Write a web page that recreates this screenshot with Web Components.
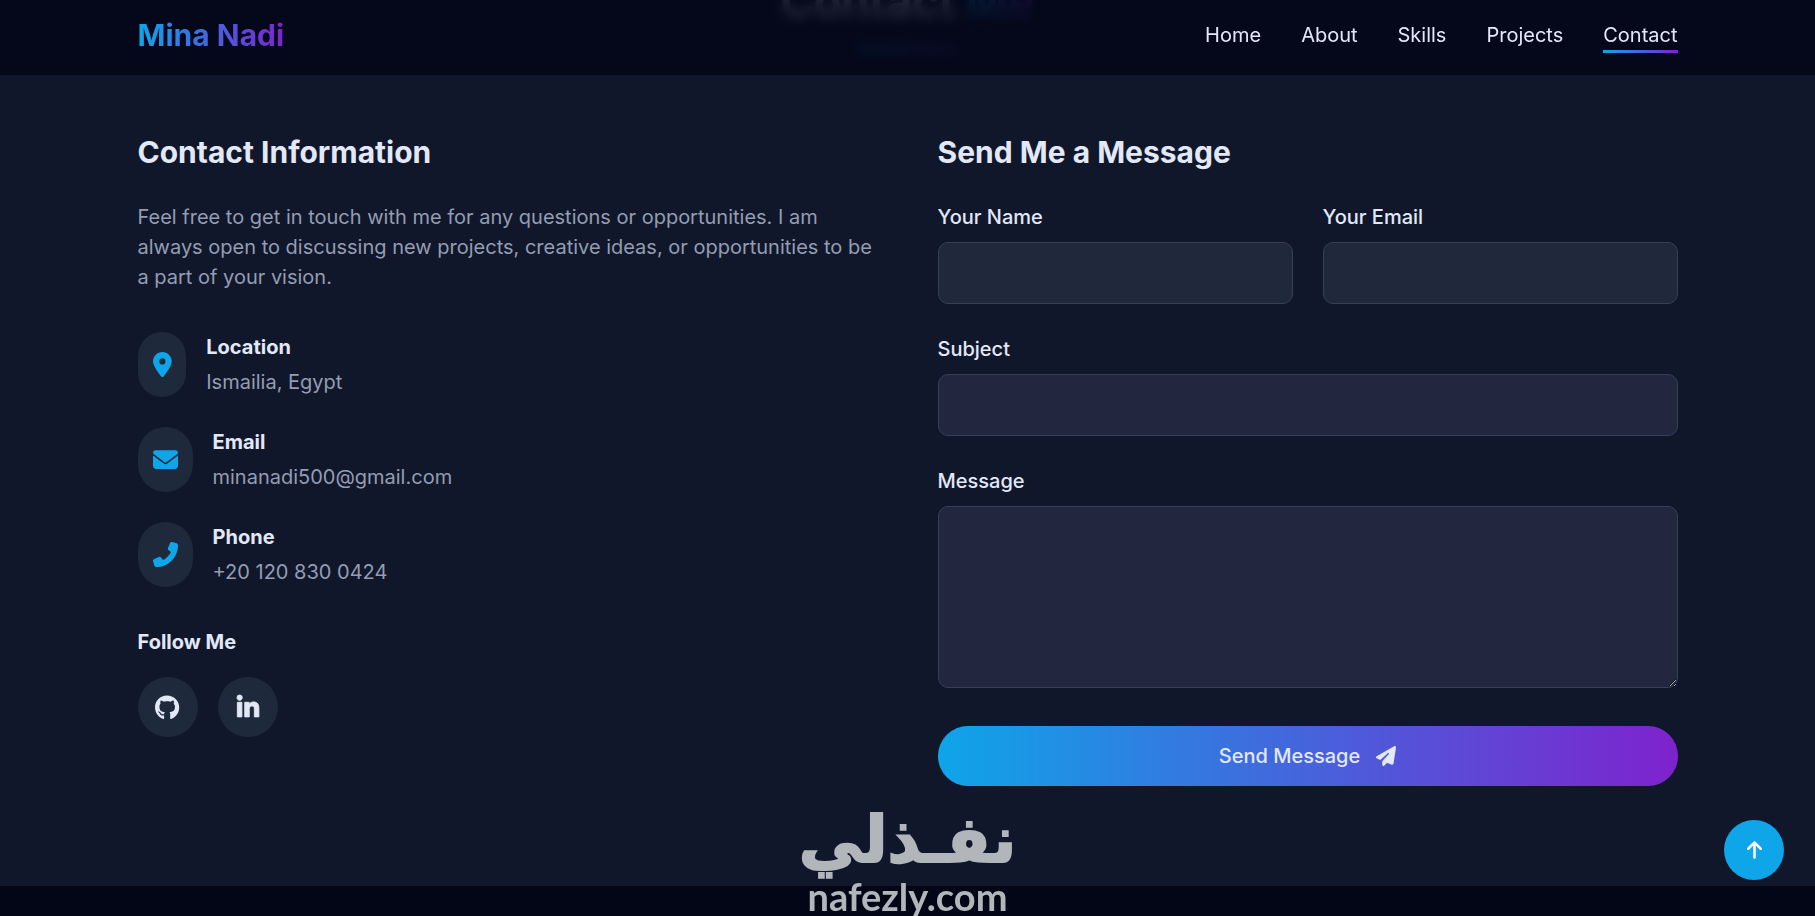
<!DOCTYPE html>
<html lang="en">
<head>
<meta charset="utf-8">
<meta name="viewport" content="width=device-width, initial-scale=1">
<title>Mina Nadi</title>
<style>
:root {
    --page: #020617;
    --section: #10172a;
    --surface: #1e293b;
    --text: #e2e8f8;
    --muted: #949db2;
    --accent: #0ea5e9;
    --gradient: linear-gradient(to right, #0ea5e9, #7e22ce);
}
html, body {
    margin: 0;
    height: 100%;
}
body {
    overflow: hidden;
    background: var(--page);
    color: var(--text);
    font: 20px/30px Inter, sans-serif;
}
</style>
</head>
<body>
<site-header>
    <nav-link href="#home">Home</nav-link>
    <nav-link href="#about">About</nav-link>
    <nav-link href="#skills">Skills</nav-link>
    <nav-link href="#projects">Projects</nav-link>
    <nav-link href="#contact" active>Contact</nav-link>
</site-header>

<contact-section>
    <contact-info slot="info">
        <info-item icon="location" heading="Location">Ismailia, Egypt</info-item>
        <info-item icon="envelope" heading="Email">minanadi500@gmail.com</info-item>
        <info-item icon="phone" heading="Phone">+20 120 830 0424</info-item>
    </contact-info>
    <contact-form slot="form"></contact-form>
</contact-section>

<scroll-top></scroll-top>
<site-watermark></site-watermark>

<script>
const ICONS = {
    location: ["0 0 384 512", "M215.7 499.2C267 435 384 279.4 384 192C384 86 298 0 192 0S0 86 0 192c0 87.4 117 243 168.3 307.2c12.3 15.3 35.1 15.3 47.4 0zM192 128a64 64 0 1 1 0 128 64 64 0 1 1 0-128z"],
    envelope: ["0 0 512 512", "M48 64C21.5 64 0 85.5 0 112c0 15.1 7.1 29.3 19.2 38.4L236.8 313.6c11.4 8.5 27 8.5 38.4 0L492.8 150.4c12.1-9.1 19.2-23.3 19.2-38.4c0-26.5-21.5-48-48-48H48zM0 176V384c0 35.3 28.7 64 64 64H448c35.3 0 64-28.7 64-64V176L294.4 339.2c-22.8 17.1-54 17.1-76.8 0L0 176z"],
    phone: ["0 0 512 512", "M347.1 24.6c7.7-18.6 28-28.5 47.4-23.2l88 24C499.9 30.2 512 46 512 64c0 247.4-200.6 448-448 448c-18 0-33.8-12.1-38.6-29.5l-24-88c-5.3-19.4 4.6-39.7 23.2-47.4l96-40c16.3-6.8 35.2-2.1 46.3 11.6L207.3 368c70.4-33.3 127.4-90.3 160.7-160.7L318.7 167c-13.7-11.2-18.4-30-11.6-46.3l40-96z"],
    github: ["0 0 496 512", "M165.9 397.4c0 2-2.3 3.6-5.2 3.6-3.3.3-5.6-1.3-5.6-3.6 0-2 2.3-3.6 5.2-3.6 3-.3 5.6 1.3 5.6 3.6zm-31.1-4.5c-.7 2 1.3 4.3 4.3 4.9 2.6 1 5.6 0 6.2-2s-1.3-4.3-4.3-5.2c-2.6-.7-5.5.3-6.2 2.3zm44.2-1.7c-2.9.7-4.9 2.6-4.6 4.9.3 2 2.9 3.3 5.9 2.6 2.9-.7 4.9-2.6 4.6-4.6-.3-1.9-3-3.2-5.9-2.9zM244.8 8C106.1 8 0 113.3 0 252c0 110.9 69.8 205.8 169.5 239.2 12.8 2.3 17.3-5.6 17.3-12.1 0-6.2-.3-40.4-.3-61.4 0 0-70 15-84.7-29.8 0 0-11.4-29.1-27.8-36.6 0 0-22.9-15.7 1.6-15.4 0 0 24.9 2 38.6 25.8 21.9 38.6 58.6 27.5 72.9 20.9 2.3-16 8.8-27.1 16-33.7-55.9-6.2-112.3-14.3-112.3-110.5 0-27.5 7.6-41.3 23.6-58.9-2.6-6.5-11.1-33.3 2.6-67.9 20.9-6.5 69 27 69 27 20-5.6 41.5-8.5 62.8-8.5s42.8 2.9 62.8 8.5c0 0 48.1-33.6 69-27 13.7 34.7 5.2 61.4 2.6 67.9 16 17.7 25.8 31.5 25.8 58.9 0 96.5-58.9 104.2-114.8 110.5 9.2 7.9 17 22.9 17 46.4 0 33.7-.3 75.4-.3 83.6 0 6.5 4.6 14.4 17.3 12.1C428.2 457.8 496 362.9 496 252 496 113.3 383.5 8 244.8 8z"],
    linkedin: ["0 0 448 512", "M100.28 448H7.4V148.9h92.88zM53.79 108.1C24.09 108.1 0 83.5 0 53.8a53.79 53.79 0 0 1 107.58 0c0 29.7-24.1 54.3-53.79 54.3zM447.9 448h-92.68V302.4c0-34.7-.7-79.2-48.29-79.2-48.29 0-55.69 37.7-55.69 76.7V448h-92.78V148.9h89.08v40.8h1.3c12.4-23.5 42.69-48.3 87.88-48.3 94 0 111.28 61.9 111.28 142.3V448z"],
    plane: ["0 0 512 512", "M498.1 5.6c10.1 7 15.4 19.1 13.5 31.2l-64 416c-1.5 9.7-7.4 18.2-16 23s-18.9 5.4-28 1.6L284 427.7l-68.5 74.1c-8.9 9.7-22.9 12.9-35.2 8.1S160 493.2 160 480V396.4c0-4 1.5-7.8 4.2-10.7L331.8 202.8c5.8-6.3 5.6-16-.4-22s-15.7-6.4-22-.7L106 360.8 17.7 316.6C7.1 311.3 .3 300.7 0 288.9s5.9-22.8 16.1-28.7l448-256c10.7-6.1 23.9-5.5 34 1.4z"],
    up: ["0 0 384 512", "M214.6 41.4c-12.5-12.5-32.8-12.5-45.3 0l-160 160c-12.5 12.5-12.5 32.8 0 45.3s32.8 12.5 45.3 0L160 141.2V448c0 17.7 14.3 32 32 32s32-14.3 32-32V141.2L329.4 246.6c12.5 12.5 32.8 12.5 45.3 0s12.5-32.8 0-45.3l-160-160z"]
};

// base class: every element clones its own html into an open shadow root
class BaseElement extends HTMLElement {
    constructor() {
        super();
        const template = document.createElement("template");
        template.innerHTML = `<style>*, *::before, *::after { box-sizing: border-box; }</style>` + this.constructor.html;
        this.attachShadow({mode: "open"});
        this.shadowRoot.appendChild(template.content.cloneNode(true));
    }

    connectedCallback() {
        this.render();
    }

    render() {}
}

class AppIcon extends BaseElement {
    static html = `
<style>
:host {
    display: inline-flex;
    --size: 25px;
}
svg {
    display: block;
    height: var(--size);
    overflow: visible;
    fill: currentColor;
}
:host([name="linkedin"]) path {
    stroke: currentColor;
    stroke-width: 18;
}
</style>
<svg aria-hidden="true"><path></path></svg>
`;

    render() {
        const [box, d] = ICONS[this.getAttribute("name")];
        this.shadowRoot.querySelector("svg").setAttribute("viewBox", box);
        this.shadowRoot.querySelector("path").setAttribute("d", d);
    }
}

class NavLink extends BaseElement {
    static html = `
<style>
:host { display: block; }
a {
    display: block;
    position: relative;
    color: inherit;
    text-decoration: none;
}
:host([active]) a::after {
    content: "";
    position: absolute;
    left: 0;
    right: 0;
    top: 100%;
    height: 3px;
    background: var(--gradient);
}
</style>
<a><slot></slot></a>
`;

    render() {
        this.shadowRoot.querySelector("a").href = this.getAttribute("href");
    }
}

class SiteHeader extends BaseElement {
    static html = `
<style>
:host {
    display: block;
    position: fixed;
    inset: 0 0 auto;
    z-index: 10;
    padding: 15px 20px 20px;
    background: rgba(2, 6, 23, 0.86);
    backdrop-filter: blur(6px);
}
.bar {
    display: flex;
    align-items: center;
    justify-content: space-between;
    max-width: 1540px;
    margin: 0 auto;
}
.logo {
    font-size: 30px;
    line-height: 40px;
    font-weight: 700;
    text-decoration: none;
    color: transparent;
    background: var(--gradient);
    background-clip: text;
    -webkit-background-clip: text;
}
nav {
    display: flex;
    gap: 40px;
}
</style>
<div class="bar">
    <a class="logo" href="#home">Mina Nadi</a>
    <nav><slot></slot></nav>
</div>
`;
}

class ContactSection extends BaseElement {
    static html = `
<style>
:host {
    display: block;
    /* scrolled so that the title sits under the header */
    margin-top: -123px;
    padding: 100px 20px;
    background: var(--section);
}
h2 {
    margin: 0;
    font-size: 45px;
    line-height: 50px;
    font-weight: 700;
    text-align: center;
}
h2 span {
    color: transparent;
    background: var(--gradient);
    background-clip: text;
    -webkit-background-clip: text;
}
.rule {
    width: 100px;
    height: 5px;
    margin: 20px auto 80px;
    background: var(--gradient);
}
.columns {
    display: grid;
    grid-template-columns: 1fr 1fr;
    gap: 60px;
    max-width: 1540px;
    margin: 0 auto;
}
</style>
<section>
    <h2>Contact <span>Me</span></h2>
    <div class="rule"></div>
    <div class="columns">
        <slot name="info"></slot>
        <slot name="form"></slot>
    </div>
</section>
`;
}

class ContactInfo extends BaseElement {
    static html = `
<style>
:host { display: block; }
h3 {
    margin: 0 0 30px;
    font-size: 30px;
    line-height: 40px;
    font-weight: 700;
}
p {
    margin: 0 0 40px;
    color: var(--muted);
}
.items {
    display: flex;
    flex-direction: column;
    gap: 30px;
    margin-bottom: 40px;
}
h4 {
    margin: 0 0 20px;
    font-size: 20px;
    font-weight: 700;
}
.social {
    display: flex;
    gap: 20px;
}
.social a {
    display: flex;
    align-items: center;
    justify-content: center;
    width: 60px;
    height: 60px;
    border-radius: 50%;
    background: var(--surface);
    color: var(--text);
}
</style>
<h3>Contact Information</h3>
<p>Feel free to get in touch with me for any questions or opportunities. I am always open to discussing new projects, creative ideas, or opportunities to be a part of your vision.</p>
<div class="items"><slot></slot></div>
<h4>Follow Me</h4>
<div class="social">
    <a href="#github" aria-label="GitHub"><app-icon name="github"></app-icon></a>
    <a href="#linkedin" aria-label="LinkedIn"><app-icon name="linkedin"></app-icon></a>
</div>
`;
}

class InfoItem extends BaseElement {
    static html = `
<style>
:host {
    display: flex;
    gap: 20px;
}
.icon {
    display: flex;
    align-items: center;
    padding: 15px;
    border-radius: 50px;
    background: var(--surface);
    color: var(--accent);
}
h4 {
    margin: 0 0 5px;
    font-size: 20px;
    font-weight: 700;
}
.value { color: var(--muted); }
</style>
<div class="icon"></div>
<div>
    <h4></h4>
    <div class="value"><slot></slot></div>
</div>
`;

    render() {
        this.shadowRoot.querySelector(".icon").innerHTML = `<app-icon name="${this.getAttribute("icon")}"></app-icon>`;
        this.shadowRoot.querySelector("h4").textContent = this.getAttribute("heading");
    }
}

class FormField extends BaseElement {
    static html = `
<style>
:host { display: block; }
label {
    display: block;
    margin-bottom: 10px;
    font-weight: 500;
}
input, textarea {
    display: block;
    width: 100%;
    margin: 0;
    padding: 15px;
    border: 1px solid #334155;
    border-radius: 10px;
    outline: none;
    background: var(--field, #20283b);
    color: inherit;
    font: inherit;
}
input { height: 62px; }
textarea { resize: vertical; }
</style>
<label for="field"></label>
`;

    render() {
        const type = this.getAttribute("type");
        const field = document.createElement(type === "textarea" ? "textarea" : "input");
        field.id = "field";
        if (type === "textarea") {
            field.rows = 5;
        } else {
            field.type = type;
        }
        this.shadowRoot.querySelector("label").textContent = this.getAttribute("label");
        this.shadowRoot.appendChild(field);
    }
}

class ContactForm extends BaseElement {
    static html = `
<style>
:host { display: block; }
h3 {
    margin: 0 0 30px;
    font-size: 30px;
    line-height: 40px;
    font-weight: 700;
}
form {
    display: grid;
    grid-template-columns: 1fr 1fr;
    gap: 30px;
}
.wide {
    grid-column: 1 / -1;
    --field: #22273f;
}
button {
    display: flex;
    align-items: center;
    justify-content: center;
    gap: 16px;
    height: 60px;
    margin: 8px 0 0;
    padding: 0 30px;
    border: 0;
    border-radius: 30px;
    background: var(--gradient);
    color: var(--text);
    font: inherit;
    font-weight: 500;
    cursor: pointer;
}
app-icon { --size: 20px; }
</style>
<h3>Send Me a Message</h3>
<form>
    <form-field label="Your Name" type="text"></form-field>
    <form-field label="Your Email" type="email"></form-field>
    <form-field class="wide" label="Subject" type="text"></form-field>
    <form-field class="wide" label="Message" type="textarea"></form-field>
    <button class="wide" type="submit">Send Message <app-icon name="plane"></app-icon></button>
</form>
`;
}

class ScrollTop extends BaseElement {
    static html = `
<style>
:host {
    display: block;
    position: fixed;
    right: 31px;
    bottom: 36px;
    z-index: 5;
}
button {
    display: flex;
    align-items: center;
    justify-content: center;
    width: 60px;
    height: 60px;
    padding: 0;
    border: 0;
    border-radius: 50%;
    background: var(--accent);
    color: #fff;
    cursor: pointer;
}
app-icon { --size: 20px; }
</style>
<button type="button" aria-label="Back to top"><app-icon name="up"></app-icon></button>
`;

    render() {
        this.shadowRoot.querySelector("button").addEventListener("click", () => {
            window.scrollTo({top: 0, behavior: "smooth"});
        });
    }
}

class SiteWatermark extends BaseElement {
    static html = `
<style>
:host {
    display: flex;
    flex-direction: column;
    align-items: center;
    position: fixed;
    inset: auto 0 0;
    z-index: 6;
    color: #b1b6ba;
    pointer-events: none;
}
.arabic {
    font: 700 64px/72px "DejaVu Sans", sans-serif;
    -webkit-text-stroke: 2px currentColor;
    stroke-linejoin: round;
}
.latin {
    font: 700 38px/40px Lato, sans-serif;
}
</style>
<span class="arabic" lang="ar" dir="rtl">نفـذلي</span>
<span class="latin">nafezly.com</span>
`;
}

customElements.define("app-icon", AppIcon);
customElements.define("nav-link", NavLink);
customElements.define("site-header", SiteHeader);
customElements.define("info-item", InfoItem);
customElements.define("contact-info", ContactInfo);
customElements.define("form-field", FormField);
customElements.define("contact-form", ContactForm);
customElements.define("contact-section", ContactSection);
customElements.define("scroll-top", ScrollTop);
customElements.define("site-watermark", SiteWatermark);
</script>
</body>
</html>
